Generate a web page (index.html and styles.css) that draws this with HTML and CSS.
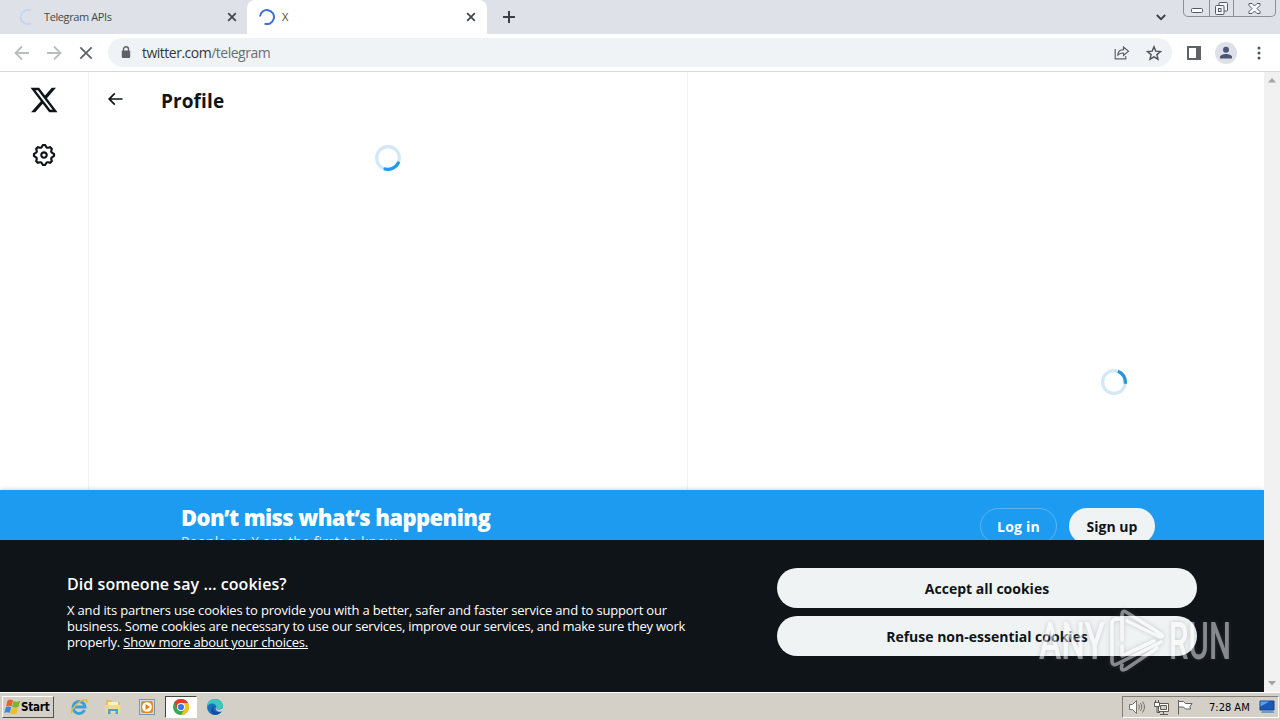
FILE: index.html
```html
<!DOCTYPE html>
<html lang="en">
<head>
    <meta charset="UTF-8">
    <meta name="viewport" content="width=device-width, initial-scale=1.0">
    <title>X</title>
    <link rel="stylesheet" href="styles.css">
</head>
<body>
    <div class="tabstrip">
        <div class="tab">
            <svg class="tab-spinner" width="16" height="16" viewBox="0 0 16 16"><path d="M11 14.2A7 7 0 1 1 11 1.8" fill="none" stroke="#c3d5f2" stroke-width="1.8"/></svg>
            <span class="tab-title title-api">Telegram APIs</span>
            <svg class="tab-close" width="10" height="10" viewBox="0 0 10 10"><path d="M1.2 1.2l7.6 7.6M8.8 1.2L1.2 8.8" stroke="#45494d" stroke-width="1.8"/></svg>
        </div>
        <div class="tab active">
            <svg class="tab-spinner" width="16" height="16" viewBox="0 0 16 16"><path d="M1 8.5A7 7 0 1 1 6.5 14.9" fill="none" stroke="#3b70cf" stroke-width="2" transform="rotate(8 8 8)"/></svg>
            <span class="tab-title">X</span>
            <svg class="tab-close" width="10" height="10" viewBox="0 0 10 10"><path d="M1.2 1.2l7.6 7.6M8.8 1.2L1.2 8.8" stroke="#45494d" stroke-width="1.8"/></svg>
        </div>
        <svg class="new-tab" width="12" height="12" viewBox="0 0 12 12"><path d="M6 0v12M0 6h12" stroke="#3c4043" stroke-width="2"/></svg>
        <svg class="tab-search" width="10" height="7" viewBox="0 0 10 7"><path d="M.8 1L5 5.2 9.2 1" fill="none" stroke="#3c4043" stroke-width="1.8"/></svg>
        <div class="window-buttons">
            <span class="minimize"><svg width="12" height="5" viewBox="0 0 12 5"><rect x=".5" y=".5" width="11" height="4" rx="1" fill="#fff" stroke="#555b66"/></svg></span>
            <span class="restore"><svg width="13" height="13" viewBox="0 0 13 13"><g fill="#f4f5f8" stroke="#555b66"><rect x="4" y=".5" width="8.5" height="8.5" rx="1"/><rect x=".5" y="3.5" width="8.5" height="9" rx="1"/><rect x="3.5" y="6.5" width="2.5" height="3"/></g></svg></span>
            <span class="close"><svg width="13" height="11" viewBox="0 0 13 11"><path d="M1 .5h3L6.5 3 9 .5h3v2L9 5.5l3 3v2H9L6.5 8 4 10.500H1v-2l3-3-3-3z" fill="#f7f8fa" stroke="#555b66"/></svg></span>
        </div>
    </div>

    <div class="toolbar">
        <svg class="nav-icon" width="16" height="16" viewBox="0 0 16 16"><path d="M15 8H2M8 1.500L1.500 8 8 14.500" fill="none" stroke="#babcbe" stroke-width="1.800"/></svg>
        <svg class="nav-icon" width="16" height="16" viewBox="0 0 16 16"><path d="M1 8h13M8 1.500L14.500 8 8 14.500" fill="none" stroke="#babcbe" stroke-width="1.800"/></svg>
        <svg class="nav-icon" width="16" height="16" viewBox="0 0 16 16"><path d="M2.300 2.300l11.400 11.400M13.700 2.300L2.300 13.700" stroke="#5f6368" stroke-width="1.800"/></svg>
        <div class="omnibox">
            <svg class="lock" width="10" height="13" viewBox="0 0 10 13"><path d="M2.500 5V3.300a2.500 2.500 0 0 1 5 0V5" fill="none" stroke="#5f6368" stroke-width="1.400"/><rect x=".8" y="4.500" width="8.400" height="7.500" rx="1" fill="#5f6368"/></svg>
            <span class="url">twitter.com<span class="path">/telegram</span></span>
            <svg class="share" width="16" height="14" viewBox="0 0 16 14"><g fill="none" stroke="#5f6368" stroke-width="1.200"><path d="M1.200 3v9.800h10.500V10"/><path d="M3.800 9C4 5.500 6.200 3.700 9.500 3.600V1l5 4.300-5 4.200V7C7 7 5.200 7.600 3.800 9z"/></g></svg>
            <svg class="star" width="16" height="16" viewBox="0 0 16 16"><path d="M8 1.800l1.800 4.300 4.700.4-3.600 3.100 1.100 4.600L8 11.800l-4 2.400 1.100-4.600-3.600-3.100 4.700-.4z" fill="none" stroke="#4f5358" stroke-width="1.400"/></svg>
        </div>
        <svg class="side-panel" width="14" height="14" viewBox="0 0 14 14"><path d="M1 1h12v12H1z" fill="none" stroke="#5f6368" stroke-width="2"/><path d="M9 0h5v14H9z" fill="#5f6368"/></svg>
        <svg class="avatar" width="22" height="22" viewBox="0 0 22 22"><circle cx="11" cy="11" r="11" fill="#dde1e7"/><circle cx="11" cy="7.800" r="3" fill="#4c5674"/><path d="M5 16.500v-1.600c0-2 3.500-3 6-3s6 1 6 3v1.600z" fill="#4c5674"/></svg>
        <svg class="more" width="4" height="14" viewBox="0 0 4 14"><g fill="#505459"><circle cx="2" cy="2" r="1.500"/><circle cx="2" cy="7" r="1.500"/><circle cx="2" cy="12" r="1.500"/></g></svg>
    </div>

    <div class="viewport">
        <div class="page">
            <div class="columns">
                <nav class="sidebar">
                    <svg class="logo" width="30" height="30" viewBox="0 0 24 24"><path d="M18.244 2.250h3.308l-7.227 8.260 8.502 11.240H16.170l-5.214-6.817L4.990 21.750H1.680l7.730-8.835L1.254 2.250H8.080l4.713 6.231zm-1.161 17.520h1.833L7.084 4.126H5.117z" fill="#0f1419"/></svg>
                    <svg class="settings" width="26" height="26" viewBox="0 0 24 24"><path fill="#0f1419" d="M10.540 1.750h2.920l1.570 2.360c.110.170.320.250.530.210l2.530-.590 2.170 2.170-.580 2.540c-.050.200.040.410.210.530l2.360 1.570v2.920l-2.360 1.570c-.170.120-.260.330-.210.530l.580 2.540-2.170 2.170-2.530-.590c-.210-.040-.420.040-.530.210l-1.570 2.360h-2.920l-1.580-2.360c-.110-.170-.320-.250-.520-.210l-2.540.590-2.170-2.170.580-2.540c.050-.200-.030-.410-.210-.530l-2.350-1.570v-2.920L4.100 8.970c.180-.120.260-.330.210-.530L3.730 5.900 5.900 3.730l2.540.590c.200.040.410-.040.520-.210l1.580-2.360zm1.070 2l-.980 1.470C10.050 6.080 9 6.500 7.990 6.270l-1.460-.340-.6.600.330 1.460c.240 1.010-.180 2.070-1.050 2.640l-1.460.980v.780l1.460.980c.870.570 1.290 1.630 1.050 2.640l-.330 1.460.6.600 1.460-.340c1.010-.230 2.060.190 2.640 1.050l.980 1.470h.780l.970-1.470c.580-.860 1.630-1.280 2.650-1.050l1.450.340.610-.600-.340-1.460c-.230-1.010.180-2.070 1.050-2.640l1.470-.980v-.780l-1.470-.980c-.870-.570-1.280-1.630-1.050-2.640l.340-1.460-.610-.600-1.450.340c-1.020.230-2.070-.190-2.650-1.050l-.970-1.470h-.780zM12 10.500c-.830 0-1.500.670-1.500 1.500s.670 1.500 1.500 1.500c.820 0 1.500-.670 1.500-1.500s-.680-1.500-1.500-1.500zM8.500 12c0-1.930 1.560-3.500 3.500-3.500 1.930 0 3.500 1.570 3.500 3.500s-1.570 3.500-3.500 3.500c-1.940 0-3.500-1.570-3.500-3.500z"/></svg>
                </nav>
                <main class="timeline">
                    <div class="profile-header">
                        <svg width="20" height="20" viewBox="0 0 24 24"><path fill="#0f1419" d="M7.414 13l5.043 5.040-1.414 1.420L3.586 12l7.457-7.460 1.414 1.420L7.414 11H21v2H7.414z"/></svg>
                        <h1>Profile</h1>
                    </div>
                    <svg class="spinner" width="26" height="26" viewBox="0 0 32 32"><circle cx="16" cy="16" r="14" fill="none" stroke="#d2e8f8" stroke-width="4"/><circle cx="16" cy="16" r="14" fill="none" stroke="#1d9bf0" stroke-width="4" stroke-linecap="round" stroke-dasharray="19 69" transform="rotate(26 16 16)"/></svg>
                </main>
                <aside class="aside">
                    <svg class="spinner" width="26" height="26" viewBox="0 0 32 32"><circle cx="16" cy="16" r="14" fill="none" stroke="#d2e8f8" stroke-width="4"/><circle cx="16" cy="16" r="14" fill="none" stroke="#2b94d8" stroke-width="4" stroke-dasharray="19 69" transform="rotate(-70 16 16)"/></svg>
                </aside>
            </div>
            <div class="signup-bar">
                <div class="signup-text">
                    <h2>Don’t miss what’s happening</h2>
                    <p>People on X are the first to know.</p>
                </div>
                <a class="login"><span>Log in</span></a>
                <a class="signup"><span>Sign up</span></a>
            </div>
            <div class="cookies">
                <div class="cookie-text">
                    <h2>Did someone say … cookies?</h2>
                    <p>
                        <span class="line-1">X and its partners use cookies to provide you with a better, safer and faster service and to support our</span><br>
                        <span class="line-2">business. Some cookies are necessary to use our services, improve our services, and make sure they work</span><br>
                        <span class="line-3">properly. <u>Show more about your choices.</u></span>
                    </p>
                </div>
                <div class="cookie-buttons">
                    <button class="accept">Accept all cookies</button>
                    <button class="refuse">Refuse non-essential cookies</button>
                </div>
            </div>
        </div>
        <div class="scrollbar">
            <svg width="8" height="5" viewBox="0 0 8 5"><path d="M0 4.500L4 0l4 4.500z" fill="#a3a3a3"/></svg>
            <svg width="8" height="5" viewBox="0 0 8 5"><path d="M0 0h8L4 4.500z" fill="#a3a3a3"/></svg>
        </div>
    </div>

    <div class="taskbar">
        <div class="start">
            <svg width="17" height="16" viewBox="0 0 17 16"><path d="M3.500 1.500c2-1.200 4-1.200 5.500 0L7.500 7.600c-1.700-1.100-3.500-1-5.400 0z" fill="#e8622c"/><path d="M9.500 2c2 1 4 1 6.700-.2l-1.700 6c-2 1.200-4 1.200-6.500.3z" fill="#76b82a"/><path d="M1.800 8.200c2-1 3.700-1 5.400.1l-1.500 5.700c-1.700-1.200-3.500-1-5.400 0z" fill="#3c84d6"/><path d="M7.800 8.800c2 1 4 1 6.500-.2l-1.600 5.700c-2 1.200-4 1.100-6.400.1z" fill="#f5bd24"/></svg>
            <span>Start</span>
        </div>
        <div class="task"><svg width="18" height="18" viewBox="0 0 18 18"><path d="M14.500 12A6 6 0 1 1 15 9H5" fill="none" stroke="#36a1dc" stroke-width="2.800"/><path d="M2 15.500C-.5 12 10 1 16.500 1.800c1 .8.3 2-.5 3" fill="none" stroke="#e8b83a" stroke-width="1.400"/></svg></div>
        <div class="task"><svg width="18" height="18" viewBox="0 0 18 18"><path d="M2 2h5l1 2h8v10H2z" fill="#dfc05e"/><path d="M4 4h10v5H4z" fill="#f8f1c6"/><path d="M1.500 7h15v8h-15z" fill="#f0dc88"/><path d="M4 16v-5h10v5h-2.500v-3h-5v3z" fill="#4f9fd0"/></svg></div>
        <div class="task"><svg width="18" height="18" viewBox="0 0 18 18"><rect x="1.500" y="1.500" width="15" height="15" fill="#c9deee" stroke="#699dc5"/><rect x="3" y="3" width="12" height="12" rx="2" fill="#f28b16"/><circle cx="9" cy="9" r="4.800" fill="#fff"/><path d="M7.500 6l4.500 3-4.500 3z" fill="#ee7b10"/></svg></div>
        <div class="task current"><svg width="16" height="16" viewBox="0 0 16 16"><circle cx="8" cy="8" r="8" fill="#34a853"/><path d="M8 8L1.070 4A8 8 0 0 1 14.930 4H8z" fill="#e33b2e"/><path d="M8 4h6.930A8 8 0 0 1 8 16l3.500-6z" fill="#fbc116"/><path d="M1.070 4l3.500 6L8 8z" fill="#e33b2e"/><circle cx="8" cy="8" r="4" fill="#fff"/><circle cx="8" cy="8" r="3.100" fill="#3b78e7"/></svg></div>
        <div class="task"><svg width="18" height="18" viewBox="0 0 18 18"><circle cx="9" cy="9" r="8" fill="#1673c4"/><path d="M1 9C1.500 3.500 5 1 9 1c5 0 8 3.500 8 6.800 0 2.500-2 3.800-4 3.800-2.500 0-3-.9-2.500-1.800C11 7 8 5 5.500 5.500 3 6 1.500 7.500 1 9z" fill="#3cc6bd"/><path d="M9 8c-3 1.500-1.500 6 3 6 2 0 3-.5 4-1.200-1.500 3-5 4.500-8 4-4-1.500-4-8 1-8.800z" fill="#124f9c"/><path d="M10.500 8.500c.3 1-.6 1.500 0 2.400 1 1.200 4.200 1.200 6-.8l1.500 2-3 1.600c-4 .5-6.500-2.500-4.500-5.200z" fill="#d4d0c8"/></svg></div>
        <div class="tray">
            <svg width="18" height="16" viewBox="0 0 18 16"><g stroke="#77736c" fill="none"><path d="M1.500 5.500h3l4-4v13l-4-4h-3z" fill="#fff"/><path d="M10.500 5.500q2 2.500 0 5M12.500 4q3 4 0 8M14.500 2.500q4 5.500 0 11"/></g></svg>
            <svg width="17" height="17" viewBox="0 0 17 17"><g stroke="#5f5c56" fill="#fff"><path d="M5.500 4.500h10v8h-10z"/><path d="M7.500 6.500h6v4h-6z" fill="#d4d0c8"/><path d="M7 15.500h8M10.500 12.500v3" fill="none"/><path d="M1.500 3.500h5v4h-5zM2.500 1v2.500M5.500 1v2.500"/><path d="M4 7.500v6h3" fill="none"/></g></svg>
            <svg width="16" height="16" viewBox="0 0 16 16"><g stroke="#65625c" fill="#fff"><path d="M1.500 1v14.500"/><path d="M1.500 2.500h5l2 2h6.500l-2 3 .5 2.500h-5l-2-2h-5z"/></g></svg>
            <span class="clock">7:28 AM</span>
            <svg class="desktop" width="16" height="14" viewBox="0 0 16 14"><path d="M1 1h14v9H1z" fill="#1a59b5" stroke="#164584"/><path d="M1.500 1.500h9l-9 5z" fill="#5aa3ea"/><path d="M3 11h11l1.500 2H2z" fill="#6d9ccb"/></svg>
        </div>
    </div>

    <svg class="watermark" width="200" height="70" viewBox="0 0 200 70">
        <text x="4" y="53" textLength="66" lengthAdjust="spacingAndGlyphs">ANY</text>
        <g fill="none" stroke-width="3.600" stroke-linejoin="round" stroke-linecap="round">
            <path d="M84 13q-7-1-7 5v38q1 4 5 2l44-22"/>
            <path d="M87 34V9q0-5 4-3l35 22q3 3-1 3L92 15"/>
            <path d="M87 40V50l32-15"/>
            <path d="M87 59q-2 7 4 4l31-21"/>
        </g>
        <text x="134" y="53" textLength="62" lengthAdjust="spacingAndGlyphs">RUN</text>
    </svg>
</body>
</html>
```
FILE: styles.css
```css
* {
    box-sizing: border-box;
}
body {
    margin: 0;
    width: 1280px;
    height: 720px;
    overflow: hidden;
    display: flex;
    flex-direction: column;
    font-family: "Open Sans", "Noto Sans", sans-serif;
    color: #0f1419;
    background: #fff;
}
svg {
    display: block;
    flex: none;
}
h1, h2, p {
    margin: 0;
    white-space: nowrap;
}

/* tabs */
.tabstrip {
    height: 34px;
    flex: none;
    display: flex;
    align-items: center;
    background: #dee1e8;
}
.tab {
    width: 247px;
    height: 34px;
    padding: 0 10px 0 20px;
    display: flex;
    align-items: center;
    gap: 8px;
}
.tab.active {
    width: 240px;
    padding: 0 11px 0 12px;
    gap: 7px;
    background: #fff;
    border-radius: 8px 8px 0 0;
}
.tab-title {
    flex: 1;
    margin-top: -2px;
    font-size: 11px;
    color: #45494d;
}
.title-api {
    letter-spacing: -0.4px;
}
.new-tab {
    margin-left: 16px;
}
.tab-search {
    margin-left: auto;
    margin-right: 17px;
}
.window-buttons {
    width: 93px;
    height: 17px;
    margin-right: 4px;
    align-self: flex-start;
    display: flex;
    border: 1px solid #8b8f99;
    border-top: 0;
    border-radius: 0 0 5px 5px;
}
.window-buttons span {
    display: flex;
    align-items: center;
    justify-content: center;
}
.minimize {
    width: 25px;
    padding-top: 5px;
}
.restore {
    width: 25px;
    border: solid #8b8f99;
    border-width: 0 1px;
}
.close {
    flex: 1;
}

/* address bar */
.toolbar {
    height: 38px;
    flex: none;
    display: flex;
    align-items: center;
    padding-left: 14px;
    border-bottom: 1px solid #d7d9dc;
}
.nav-icon {
    margin-right: 16px;
}
.omnibox {
    width: 1064px;
    height: 29px;
    margin-left: -2px;
    display: flex;
    align-items: center;
    padding: 0 10px 0 13px;
    border-radius: 15px;
    background: #f0f3f5;
}
.url {
    flex: 1;
    margin-left: 11px;
    font-size: 14px;
    letter-spacing: -0.5px;
    color: #34383c;
}
.path {
    color: #6b6f74;
}
.star {
    margin-left: 16px;
}
.side-panel {
    margin-left: 15px;
}
.avatar {
    margin-left: 14px;
}
.more {
    margin-left: 20px;
}

/* page */
.viewport {
    height: 620px;
    flex: none;
    display: flex;
}
.page {
    width: 1264px;
    display: flex;
    flex-direction: column;
}
.columns {
    height: 418px;
    flex: none;
    display: flex;
}
.sidebar {
    width: 89px;
    border-right: 1px solid #eff3f4;
    display: flex;
    flex-direction: column;
    align-items: center;
    padding-top: 13px;
    gap: 27px;
}
.timeline {
    width: 599px;
    border-right: 1px solid #eff3f4;
}
.timeline .spinner {
    margin: 20px 0 0 286px;
}
.profile-header {
    height: 53px;
    display: flex;
    align-items: center;
    gap: 36px;
    padding-left: 16px;
}
.profile-header h1 {
    font-size: 19px;
    line-height: 24px;
    padding-top: 4px;
    letter-spacing: 0.1px;
}
.aside {
    padding: 297px 0 0 413px;
}
.signup-bar {
    position: relative;
    height: 50px;
    flex: none;
    display: flex;
    overflow: hidden;
    padding: 18px 109px 0 181px;
    background: #1d9bf0;
    color: #fff;
    clip-path: inset(-8px 0 0 0);
    box-shadow: 0 0 5px rgba(101, 119, 134, 0.4);
}
.signup-text {
    flex: 1;
    margin-top: -6px;
}
.signup-text h2 {
    font-size: 22px;
    line-height: 30px;
    font-weight: 800;
    letter-spacing: -0.6px;
}
.signup-text p {
    font-size: 14px;
    line-height: 20px;
    letter-spacing: 0.1px;
    color: #d9eefd;
}
.login, .signup {
    height: 36px;
    border-radius: 18px;
    display: flex;
    align-items: center;
    justify-content: center;
    font-size: 14px;
    font-weight: 700;
    padding-top: 1px;
    white-space: nowrap;
}
.login {
    width: 77px;
    border: 1px solid #5ab6f4;
    margin-right: 12px;
    letter-spacing: 0.2px;
}
.signup {
    width: 86px;
    background: #eff3f4;
    color: #0f1419;
}
.cookies {
    height: 152px;
    flex: none;
    display: flex;
    justify-content: space-between;
    padding: 28px 67px 0;
    background: #0f1419;
    color: #fff;
}
.cookie-text h2 {
    font-size: 16px;
    line-height: 24px;
    padding-top: 4px;
    font-weight: 600;
    letter-spacing: 0.06px;
}
.cookie-text p {
    font-size: 13px;
    line-height: 16px;
    margin-top: 6px;
}
.line-1 {
    letter-spacing: -0.17px;
}
.line-2 {
    letter-spacing: -0.21px;
}
.line-3 {
    letter-spacing: -0.2px;
}
.cookie-buttons {
    width: 420px;
    display: flex;
    flex-direction: column;
    gap: 8px;
}
.cookie-buttons button {
    height: 40px;
    border: 0;
    border-radius: 20px;
    padding: 0;
    background: #eff3f4;
    color: #0f1419;
    font: 700 14px "Open Sans", sans-serif;
}
.scrollbar {
    width: 16px;
    background: #f1f1f1;
    display: flex;
    flex-direction: column;
    align-items: center;
    justify-content: space-between;
    padding: 6px 0;
}

/* taskbar */
.taskbar {
    height: 28px;
    flex: none;
    display: flex;
    align-items: center;
    padding: 1px 1px 0 2px;
    background: #d4d0c8;
    border-top: 1px solid #fff;
    font-family: "DejaVu Sans Condensed", "DejaVu Sans", sans-serif;
}
.start {
    width: 52px;
    height: 22px;
    display: flex;
    align-items: center;
    padding-left: 1px;
    margin-right: 8px;
    border: 1px solid;
    border-color: #fff #55524c #55524c #fff;
    font-size: 11.5px;
    font-weight: 700;
    color: #000;
    letter-spacing: -0.2px;
}
.task {
    width: 34px;
    height: 22px;
    display: flex;
    align-items: center;
    justify-content: center;
}
.task.current {
    width: 32px;
    margin: 0 1px;
    background: #fff;
    border: 1px solid;
    border-color: #44423e #fff #fff #44423e;
}
.tray {
    width: 157px;
    height: 22px;
    margin-left: auto;
    display: flex;
    align-items: center;
    gap: 7px;
    padding-left: 5px;
    border: 1px solid;
    border-color: #817e77 #fff #fff #817e77;
}
.clock {
    width: 43px;
    margin-left: 9px;
    font-size: 11px;
    color: #000;
    white-space: nowrap;
    letter-spacing: 0;
}

.watermark {
    position: absolute;
    left: 1035px;
    top: 606px;
    opacity: 0.5;
    filter: drop-shadow(0 0 2px rgba(100, 100, 100, 0.6));
    stroke: #fff;
}
.watermark text {
    font-family: Roboto, sans-serif;
    font-size: 52px;
    font-weight: 500;
    fill: #fff;
    stroke: none;
}
```
